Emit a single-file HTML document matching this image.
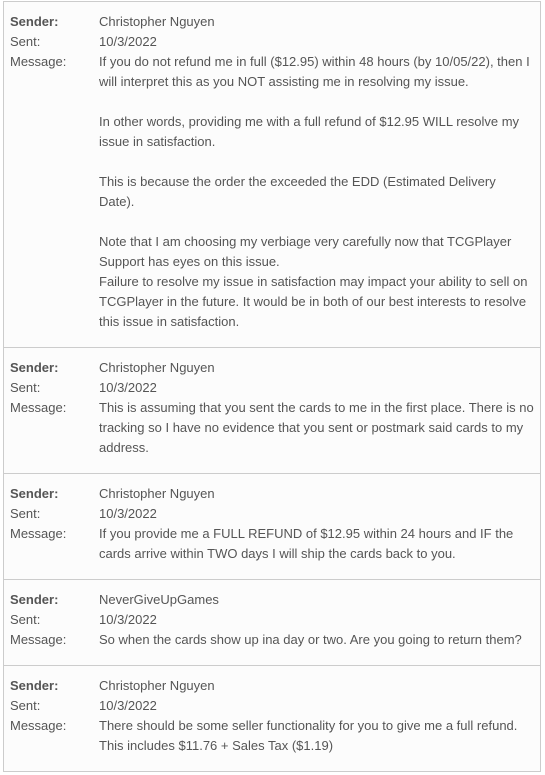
<!DOCTYPE html>
<html><head><style>
body{margin:0;background:#fff;font-family:"Liberation Sans",Arial,sans-serif;font-size:13px;color:#555;}
.wrap{position:absolute;left:3px;top:1px;width:536px;border-left:1px solid #ccc;border-right:1px solid #ccc;background:#fcfcfc;}
.blk{border-top:1px solid #ccc;padding:10px 0 15px 0;}
.row{display:flex;line-height:20px;white-space:nowrap;}
.l{width:89px;padding-left:6px;flex:none;}
.b{font-weight:bold;color:#555;}
</style></head><body>
<div class="wrap">
<div class="blk">
<div class="row"><div class="l b">Sender:</div><div>Christopher Nguyen</div></div>
<div class="row"><div class="l">Sent:</div><div>10/3/2022</div></div>
<div class="row"><div class="l">Message:</div><div>If you do not refund me in full ($12.95) within 48 hours (by 10/05/22), then I<br>will interpret this as you NOT assisting me in resolving my issue.<br><br>In other words, providing me with a full refund of $12.95 WILL resolve my<br>issue in satisfaction.<br><br>This is because the order the exceeded the EDD (Estimated Delivery<br>Date).<br><br>Note that I am choosing my verbiage very carefully now that TCGPlayer<br>Support has eyes on this issue.<br>Failure to resolve my issue in satisfaction may impact your ability to sell on<br>TCGPlayer in the future. It would be in both of our best interests to resolve<br>this issue in satisfaction.</div></div>
</div>
<div class="blk">
<div class="row"><div class="l b">Sender:</div><div>Christopher Nguyen</div></div>
<div class="row"><div class="l">Sent:</div><div>10/3/2022</div></div>
<div class="row"><div class="l">Message:</div><div>This is assuming that you sent the cards to me in the first place. There is no<br>tracking so I have no evidence that you sent or postmark said cards to my<br>address.</div></div>
</div>
<div class="blk">
<div class="row"><div class="l b">Sender:</div><div>Christopher Nguyen</div></div>
<div class="row"><div class="l">Sent:</div><div>10/3/2022</div></div>
<div class="row"><div class="l">Message:</div><div>If you provide me a FULL REFUND of $12.95 within 24 hours and IF the<br>cards arrive within TWO days I will ship the cards back to you.</div></div>
</div>
<div class="blk">
<div class="row"><div class="l b">Sender:</div><div>NeverGiveUpGames</div></div>
<div class="row"><div class="l">Sent:</div><div>10/3/2022</div></div>
<div class="row"><div class="l">Message:</div><div>So when the cards show up ina day or two. Are you going to return them?</div></div>
</div>
<div class="blk" style="border-bottom:1px solid #ccc">
<div class="row"><div class="l b">Sender:</div><div>Christopher Nguyen</div></div>
<div class="row"><div class="l">Sent:</div><div>10/3/2022</div></div>
<div class="row"><div class="l">Message:</div><div>There should be some seller functionality for you to give me a full refund.<br>This includes $11.76 + Sales Tax ($1.19)</div></div>
</div>
</div>
</body></html>
